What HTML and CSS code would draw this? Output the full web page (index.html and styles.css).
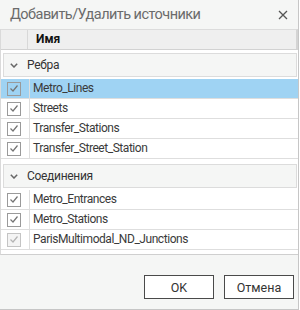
FILE: index.html
```html
<!DOCTYPE html>
<html lang="ru">
<head>
    <meta charset="UTF-8">
    <title>Добавить/Удалить источники</title>
    <link rel="stylesheet" href="styles.css">
</head>
<body>
    <div class="dialog">
        <div class="title-bar">
            <span class="title">Добавить/Удалить источники</span>
            <svg class="close" width="10" height="10" viewBox="0 0 10 10">
                <path d="M1 1 L9 9 M9 1 L1 9" stroke="#555" stroke-width="1.3" fill="none"/>
            </svg>
        </div>

        <div class="list">
            <div class="list-header">
                <div class="col-check"></div>
                <div class="col-name">Имя</div>
            </div>

            <div class="group">
                <svg class="chevron" width="8" height="5" viewBox="0 0 8 5">
                    <path d="M0.8 0.8 L4 4 L7.2 0.8" stroke="#666" stroke-width="1.5" fill="none"/>
                </svg>
                <span>Ребра</span>
            </div>
            <div class="row selected">
                <div class="col-check"><span class="box"><svg width="10" height="9" viewBox="0 0 10 9"><path d="M1.5 4.5 L4 7 L8.5 1.5" stroke="#747474" stroke-width="1.2" fill="none"/></svg></span></div>
                <div class="col-name">Metro_Lines</div>
            </div>
            <div class="row">
                <div class="col-check"><span class="box"><svg width="10" height="9" viewBox="0 0 10 9"><path d="M1.5 4.5 L4 7 L8.5 1.5" stroke="#747474" stroke-width="1.2" fill="none"/></svg></span></div>
                <div class="col-name">Streets</div>
            </div>
            <div class="row">
                <div class="col-check"><span class="box"><svg width="10" height="9" viewBox="0 0 10 9"><path d="M1.5 4.5 L4 7 L8.5 1.5" stroke="#747474" stroke-width="1.2" fill="none"/></svg></span></div>
                <div class="col-name">Transfer_Stations</div>
            </div>
            <div class="row">
                <div class="col-check"><span class="box"><svg width="10" height="9" viewBox="0 0 10 9"><path d="M1.5 4.5 L4 7 L8.5 1.5" stroke="#747474" stroke-width="1.2" fill="none"/></svg></span></div>
                <div class="col-name">Transfer_Street_Station</div>
            </div>

            <div class="group">
                <svg class="chevron" width="8" height="5" viewBox="0 0 8 5">
                    <path d="M0.8 0.8 L4 4 L7.2 0.8" stroke="#666" stroke-width="1.5" fill="none"/>
                </svg>
                <span>Соединения</span>
            </div>
            <div class="row">
                <div class="col-check"><span class="box"><svg width="10" height="9" viewBox="0 0 10 9"><path d="M1.5 4.5 L4 7 L8.5 1.5" stroke="#747474" stroke-width="1.2" fill="none"/></svg></span></div>
                <div class="col-name">Metro_Entrances</div>
            </div>
            <div class="row">
                <div class="col-check"><span class="box"><svg width="10" height="9" viewBox="0 0 10 9"><path d="M1.5 4.5 L4 7 L8.5 1.5" stroke="#747474" stroke-width="1.2" fill="none"/></svg></span></div>
                <div class="col-name">Metro_Stations</div>
            </div>
            <div class="row disabled">
                <div class="col-check"><span class="box"><svg width="10" height="9" viewBox="0 0 10 9"><path d="M1.5 4.5 L4 7 L8.5 1.5" stroke="#b4b4b4" stroke-width="1.2" fill="none"/></svg></span></div>
                <div class="col-name">ParisMultimodal_ND_Junctions</div>
            </div>
        </div>

        <div class="footer">
            <button class="btn">OK</button>
            <button class="btn">Отмена</button>
        </div>
    </div>
</body>
</html>
```

FILE: styles.css
```css
body {
    margin: 0;
    background-color: #ffffff;
    font-family: Roboto, sans-serif;
}
.dialog {
    width: 299px;
    height: 310px;
    box-sizing: border-box;
    background-color: #f5f6f5;
    border-right: 1px solid #c6c6c6;
    border-bottom: 1px solid #c6c6c6;
    display: flex;
    flex-direction: column;
}
.title-bar {
    height: 29px;
    display: flex;
    align-items: center;
    justify-content: space-between;
    padding: 0 10px 0 10px;
    flex-shrink: 0;
}
.title {
    font-size: 14.5px;
    letter-spacing: -0.55px;
    color: #6b6b6b;
    margin-top: -1px;
}
.close {
    margin-top: 1px;
}
.list {
    height: 225px;
    background-color: #ffffff;
    border-left: 1px solid #dadada;
    border-bottom: 1px solid #cfcfcf;
    flex-shrink: 0;
}
.list-header {
    height: 21px;
    box-sizing: border-box;
    display: flex;
    background-color: #efefef;
    border-top: 1px solid #dcdcdc;
    border-bottom: 1px solid #d2d2d2;
    border-right: 2px solid #d4d4d4;
    font-size: 12px;
    font-weight: bold;
    color: #111;
}
.list-header .col-check {
    width: 26px;
    border-right: 1px solid #d8d8d8;
}
.list-header .col-name {
    padding-left: 8px;
    line-height: 19px;
}
.group {
    height: 24px;
    box-sizing: border-box;
    margin: 5px 1px 2px 2px;
    background-color: #f5f6f5;
    border: 1px solid #dcdcdc;
    display: flex;
    align-items: center;
    font-size: 12px;
    letter-spacing: -0.3px;
    color: #333;
}
.list-header + .group {
    margin-top: 3px;
}
.chevron {
    margin: 0 9px 0 6px;
}
.row {
    height: 20px;
    box-sizing: border-box;
    display: flex;
    border-bottom: 1px solid #dedede;
    font-size: 12px;
    letter-spacing: -0.45px;
    color: #3a3a3a;
}
.row.selected {
    background-color: #9fd3f3;
}
.row .col-check {
    width: 28px;
    border-right: 1px solid #dedede;
    display: flex;
    align-items: center;
}
.row .col-name {
    padding-left: 3px;
    line-height: 19px;
    white-space: nowrap;
}
.box {
    width: 14px;
    height: 14px;
    box-sizing: border-box;
    margin-left: 6px;
    border: 1px solid #9a9a9a;
    display: flex;
    align-items: center;
    justify-content: center;
}
.disabled .box {
    border-color: #c4c4c4;
    background-color: #f4f4f4;
}
.footer {
    display: flex;
    justify-content: flex-end;
    gap: 10px;
    padding: 20px 4px 0 0;
}
.btn {
    width: 70px;
    height: 24px;
    background-color: #ffffff;
    border: 1px solid #4a4a4a;
    font-family: Roboto, sans-serif;
    font-size: 12.5px;
    color: #333;
    padding: 0;
}
```
